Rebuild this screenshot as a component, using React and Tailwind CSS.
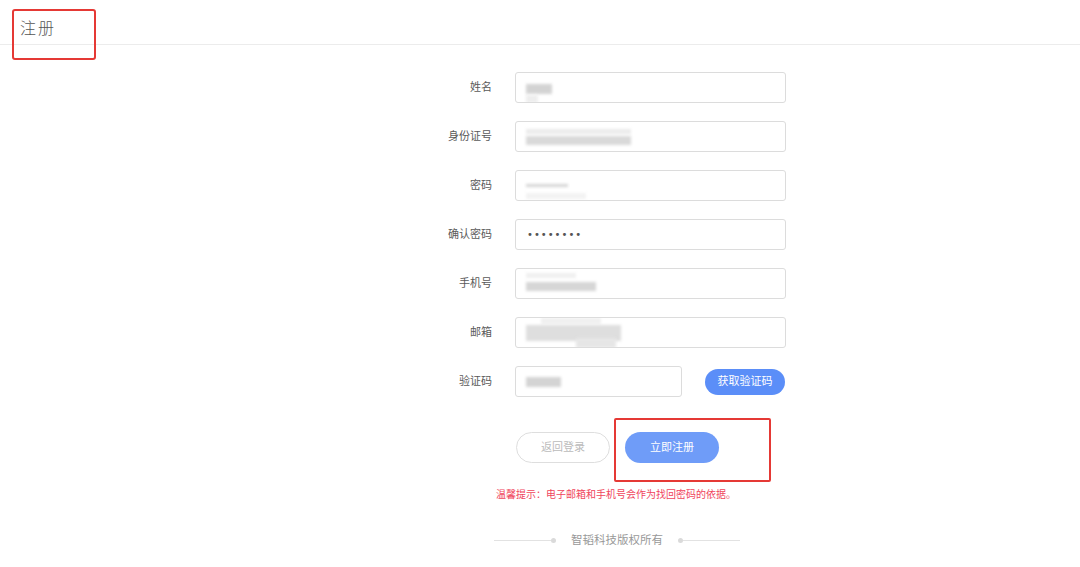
import React from "react";

const font = { fontFamily: '"Liberation Sans", "Noto Sans CJK SC", sans-serif' };

function Blur({ children }) {
  return <div className="relative h-full w-full">{children}</div>;
}

function Block({ className }) {
  return <div className={"absolute bg-[#cfcfcf] blur-[1.5px] " + className} />;
}

const rows = [
  {
    label: "姓名",
    content: (
      <>
        <Block className="left-[10px] top-[11px] w-[26px] h-[10px] opacity-90" />
        <Block className="left-[10px] top-[22px] w-[12px] h-[8px] bg-[#eeeeee]" />
      </>
    ),
  },
  {
    label: "身份证号",
    content: (
      <>
        <Block className="left-[10px] top-[7px] w-[105px] h-[5px] bg-[#ebebeb]" />
        <Block className="left-[10px] top-[14px] w-[105px] h-[9px] bg-[#d9d9d9]" />
      </>
    ),
  },
  {
    label: "密码",
    content: (
      <>
        <Block className="left-[10px] top-[13px] w-[42px] h-[3px] bg-[#d4d4d4]" />
        <Block className="left-[10px] top-[22px] w-[60px] h-[6px] bg-[#f3f3f3]" />
      </>
    ),
  },
  {
    label: "确认密码",
    content: (
      <div className="pl-[11px] h-full flex items-center text-[#555] text-[10px] tracking-[1px]" style={{ fontFamily: '"DejaVu Sans", sans-serif' }}>
        ••••••••
      </div>
    ),
  },
  {
    label: "手机号",
    content: (
      <>
        <Block className="left-[10px] top-[4px] w-[50px] h-[5px] bg-[#f0f0f0]" />
        <Block className="left-[10px] top-[13px] w-[70px] h-[9px] bg-[#d6d6d6]" />
      </>
    ),
  },
  {
    label: "邮箱",
    content: (
      <>
        <Block className="left-[25px] top-[0px] w-[60px] h-[6px] bg-[#f0f0f0]" />
        <Block className="left-[10px] top-[7px] w-[95px] h-[16px] bg-[#dedede]" />
        <Block className="left-[60px] top-[20px] w-[40px] h-[10px] bg-[#e6e6e6]" />
      </>
    ),
  },
];

export default function App() {
  return (
    <div className="relative w-full h-[567px] bg-white text-[#555] overflow-hidden" style={font}>
      {/* Header */}
      <div className="h-[45px] border-b border-[#ececec] flex items-center px-[20px]">
        <span className="text-[16px] text-[#555] tracking-[2px] leading-none mt-[10px]" style={{ fontFamily: '"Noto Sans CJK SC", sans-serif', fontWeight: 300 }}>
          注册
        </span>
      </div>
      <div className="absolute left-[12px] top-[9px] w-[84px] h-[51px] border-2 border-[#e53935] rounded-[3px]" />

      {/* Form */}
      <div className="flex flex-col items-start pl-[430px] pt-[27px] gap-[18px]">
        {rows.map((r) => (
          <div key={r.label} className="flex items-center gap-[23px]">
            <div className="w-[62px] text-right text-[11px] text-[#5a5a5a]">{r.label}</div>
            <div className="w-[271px] h-[31px] border border-[#dcdcdc] rounded-[3px] bg-white overflow-hidden">
              <Blur>{r.content}</Blur>
            </div>
          </div>
        ))}
        <div className="flex items-center gap-[23px]">
          <div className="w-[62px] text-right text-[11px] text-[#5a5a5a]">验证码</div>
          <div className="w-[167px] h-[31px] border border-[#dcdcdc] rounded-[3px] bg-white overflow-hidden">
            <Blur>
              <Block className="left-[10px] top-[10px] w-[35px] h-[10px] bg-[#d4d4d4]" />
            </Blur>
          </div>
          <button className="w-[80px] h-[26px] rounded-full bg-[#5b8ef8] text-white text-[11px]">获取验证码</button>
        </div>
      </div>

      {/* Buttons */}
      <div className="flex items-center gap-[15px] pl-[516px] mt-[35px]">
        <button className="w-[94px] h-[31px] rounded-full border border-[#dedede] text-[#bbb] text-[11px] bg-white">返回登录</button>
        <button className="w-[94px] h-[31px] rounded-full bg-[#6f9cf8] text-white text-[11px]">立即注册</button>
      </div>
      <div className="absolute left-[614px] top-[418px] w-[157px] h-[64px] border-2 border-[#e53935] rounded-[2px]" />

      <div className="pl-[496px] mt-[27px] text-[10px] text-[#f0445c] leading-none">
        温馨提示：电子邮箱和手机号会作为找回密码的依据。
      </div>

      {/* Footer */}
      <div className="flex items-center pl-[494px] mt-[32px]">
        <div className="w-[57px] h-px bg-[#e2e2e2]" />
        <div className="w-[5px] h-[5px] rounded-full bg-[#dadada]" />
        <div className="ml-[15px] mr-[15px] text-[11.5px] text-[#999] whitespace-nowrap">智韬科技版权所有</div>
        <div className="w-[5px] h-[5px] rounded-full bg-[#dadada]" />
        <div className="w-[57px] h-px bg-[#e2e2e2]" />
      </div>
    </div>
  );
}
